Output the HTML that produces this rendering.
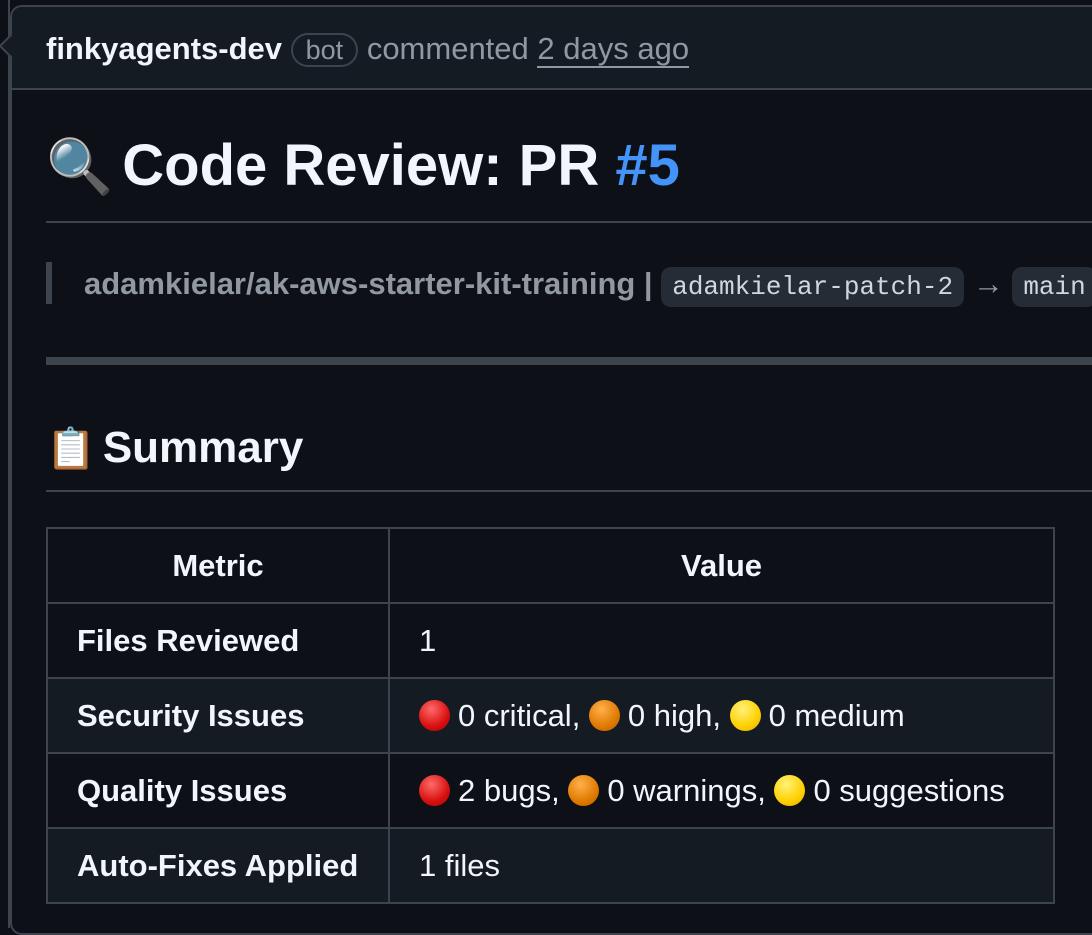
<!DOCTYPE html>
<html><head><meta charset="utf-8"><style>
*{margin:0;padding:0;box-sizing:border-box}
body{width:1092px;height:928px;background:#0d1117;overflow:hidden;font-family:"Liberation Sans",sans-serif;color:#f0f6fc;position:relative}
.abs{position:absolute;white-space:nowrap}
.dot{display:inline-block;width:31px;height:31px;border-radius:50%;vertical-align:-5px;margin-right:8px}
.r{background:radial-gradient(circle at 40% 30%,#ff6a6a,#d81010 60%,#a00)}
.o{background:radial-gradient(circle at 40% 30%,#ffb04a,#e07a00 60%,#b55a00)}
.y{background:radial-gradient(circle at 40% 30%,#fff27a,#ffd000 60%,#e0a800)}
.code{background:#262c36;border-radius:10px;font-family:"Liberation Mono",monospace;color:#d1d7e0;font-size:26px;font-weight:normal;padding:5px 11px}
table{position:absolute;left:46px;top:527px;border-collapse:collapse;font-size:31px}
td,th{border:2px solid #3d444d;height:75px;padding:0 29px;text-align:left;white-space:nowrap}
th{text-align:center;font-weight:bold}
td:first-child{font-weight:bold}
tr.alt{background:#151b23}
</style></head><body>
<div class="abs" style="left:8px;top:0;width:2px;height:928px;background:#3d444d"></div>
<div class="abs" style="left:10px;top:5px;width:1100px;height:930px;border:2px solid #3d444d;border-radius:12px;background:#0d1117"></div>
<div class="abs" style="left:12px;top:7px;width:1100px;height:83px;background:#151b23;border-bottom:2px solid #3d444d;border-top-left-radius:10px"></div>
<div class="abs" style="left:2px;top:38px;width:16px;height:16px;background:#151b23;border-left:2px solid #3d444d;border-bottom:2px solid #3d444d;transform:rotate(45deg)"></div>
<div class="abs" style="left:46px;top:30px;font-size:31px;line-height:38px">
<b style="color:#f0f6fc">finkyagents-dev</b> <span style="border:2px solid #3d444d;border-radius:20px;padding:0 13px;color:#9198a1;font-size:27px">bot</span> <span style="color:#9198a1">commented <span style="border-bottom:2px solid #9198a1">2 days ago</span></span></div>
<div class="abs" style="left:46px;top:130px;font-size:58px;font-weight:bold;line-height:72px"><span style="font-size:54px;margin-right:9px">🔍</span>Code Review: PR <span style="color:#4493f8">#5</span></div>
<div class="abs" style="left:46px;top:221px;width:1100px;height:2px;background:#3d444d"></div>
<div class="abs" style="left:46px;top:262px;width:6px;height:42px;background:#3d444d"></div>
<div class="abs" style="left:84px;top:265px;font-size:31px;font-weight:bold;color:#9198a1;line-height:38px">adamkielar/ak-aws-starter-kit-training | <span class="code">adamkielar-patch-2</span> → <span class="code">main</span></div>
<div class="abs" style="left:46px;top:357px;width:1100px;height:8px;background:#3d444d"></div>
<div class="abs" style="left:46px;top:420px;font-size:44px;font-weight:bold;line-height:56px"><span style="font-size:40px;margin-right:7px">📋</span>Summary</div>
<div class="abs" style="left:46px;top:490px;width:1100px;height:2px;background:#3d444d"></div>
<table>
<tr><th style="width:342px">Metric</th><th style="width:665px">Value</th></tr>
<tr><td>Files Reviewed</td><td>1</td></tr>
<tr class="alt"><td>Security Issues</td><td><span class="dot r"></span>0 critical, <span class="dot o"></span>0 high, <span class="dot y"></span>0 medium</td></tr>
<tr><td>Quality Issues</td><td><span class="dot r"></span>2 bugs, <span class="dot o"></span>0 warnings, <span class="dot y"></span>0 suggestions</td></tr>
<tr class="alt"><td>Auto-Fixes Applied</td><td>1 files</td></tr>
</table>
</body></html>
